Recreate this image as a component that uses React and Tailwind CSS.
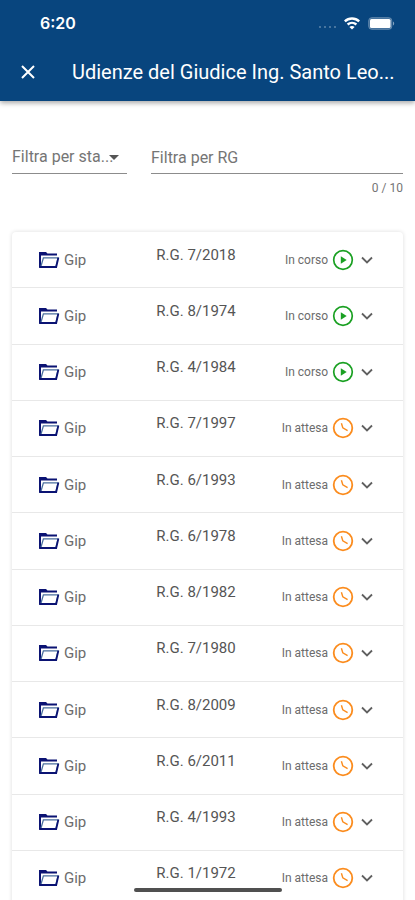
import { useState } from "react";

const MAX_RG = 10;

const HEARINGS = [
  { rg: "7/2018", status: "running" },
  { rg: "8/1974", status: "running" },
  { rg: "4/1984", status: "running" },
  { rg: "7/1997", status: "waiting" },
  { rg: "6/1993", status: "waiting" },
  { rg: "6/1978", status: "waiting" },
  { rg: "8/1982", status: "waiting" },
  { rg: "7/1980", status: "waiting" },
  { rg: "8/2009", status: "waiting" },
  { rg: "6/2011", status: "waiting" },
  { rg: "4/1993", status: "waiting" },
  { rg: "1/1972", status: "waiting" },
];

function WifiIcon() {
  return (
    <svg width="16" height="13" viewBox="0 0 16 13" fill="none" stroke="#fff" strokeWidth="2.4" aria-hidden="true">
      <path d="M.8 4.4C4.8.6 11.2.6 15.2 4.4" />
      <path d="M3.6 7.5c2.5-2.2 6.3-2.2 8.8 0" />
      <path d="M8 12.6 5.4 9.9c1.5-1.3 3.7-1.3 5.2 0z" fill="#fff" stroke="none" />
    </svg>
  );
}

function BatteryIcon() {
  return (
    <svg width="27" height="13" viewBox="0 0 27 13" aria-hidden="true">
      <rect x=".5" y=".5" width="23.5" height="12" rx="3.5" fill="#fff" fillOpacity=".25" stroke="#fff" strokeOpacity=".2" />
      <rect x="2" y="2" width="20.5" height="9" rx="1.5" fill="#fff" />
      <path d="M25 4.5c1.6.6 1.6 3.4 0 4z" fill="#fff" fillOpacity=".5" />
    </svg>
  );
}

function FolderIcon() {
  return (
    <svg width="22" height="18" viewBox="0 0 22 18" aria-hidden="true">
      <path d="M1 16.5V1h7l1.5 1.6H19v1.9H3v12z" fill="#0b1373" />
      <path d="M5.4 6.8H20l-2.2 9H2.8z" fill="#fff" stroke="#4a6f9d" strokeWidth="1.3" />
      <path d="M20.4 6.6 18.2 16H1.2" fill="none" stroke="#0b1373" strokeWidth="1.8" />
    </svg>
  );
}

function PlayIcon() {
  return (
    <svg width="22" height="22" viewBox="0 0 22 22" aria-hidden="true">
      <circle cx="11" cy="11" r="9.3" fill="none" stroke="#1aa022" strokeWidth="1.7" />
      <path d="M8.8 7.2v7.6l5.9-3.8z" fill="#1aa022" />
    </svg>
  );
}

function ClockIcon() {
  return (
    <svg width="22" height="22" viewBox="0 0 22 22" fill="none" stroke="#fb8c1e" aria-hidden="true">
      <circle cx="11" cy="11" r="9.3" strokeWidth="1.8" />
      <path d="m9.4 6.2 1.4 4.6 4.8 2.8" strokeWidth="1.4" />
    </svg>
  );
}

function HearingRow({ hearing }) {
  const [open, setOpen] = useState(false);
  const running = hearing.status === "running";

  return (
    <li className="border-b border-[#e8e8e8]">
      <button
        type="button"
        aria-expanded={open}
        onClick={() => setOpen(!open)}
        className="flex h-full w-full items-center pr-7 pl-[26px] text-left text-[#6c6c6c]"
      >
        <span className="flex flex-1 items-center gap-1 text-[15px] leading-5">
          <FolderIcon />
          Gip
        </span>
        <span className="pb-2.5 text-[15px] leading-5 text-[#555]">R.G. {hearing.rg}</span>
        <span className="flex flex-1 items-center justify-end gap-1 text-xs">
          {running ? "In corso" : "In attesa"}
          {running ? <PlayIcon /> : <ClockIcon />}
        </span>
        <svg
          width="16"
          height="10"
          viewBox="0 0 16 10"
          fill="none"
          stroke="#606060"
          strokeWidth="1.8"
          className={open ? "ml-[5px] rotate-180" : "ml-[5px]"}
          aria-hidden="true"
        >
          <path d="m3 2.5 5 5 5-5" />
        </svg>
      </button>
    </li>
  );
}

export default function App() {
  const [status, setStatus] = useState("");
  const [rg, setRg] = useState("");

  const visible = HEARINGS.filter(
    (h) => (!status || h.status === status) && h.rg.includes(rg)
  );

  return (
    <div className="relative flex h-screen flex-col overflow-hidden bg-white font-[Roboto,sans-serif]">
      <header className="z-10 bg-[#08457e] text-white shadow-[0_2px_5px_rgba(0,0,0,0.35)]">
        <div className="flex h-[46px] items-center justify-between pr-5 pl-10">
          <span className="font-[Inter,sans-serif] text-base font-semibold">6:20</span>
          <div className="flex items-center gap-2">
            <span className="flex gap-[3px] pt-2" aria-hidden="true">
              <i className="size-[2px] rounded-full bg-white/35" />
              <i className="size-[2px] rounded-full bg-white/35" />
              <i className="size-[2px] rounded-full bg-white/35" />
              <i className="size-[2px] rounded-full bg-white/35" />
            </span>
            <WifiIcon />
            <BatteryIcon />
          </div>
        </div>
        <div className="flex h-[55px] items-center gap-9 pb-1 pl-5 pr-5">
          <button type="button" aria-label="Chiudi" className="flex size-4 shrink-0 items-center justify-center">
            <svg width="16" height="16" viewBox="0 0 16 16" stroke="#fff" strokeWidth="2">
              <path d="m2 2 12 12M14 2 2 14" />
            </svg>
          </button>
          <h1 className="min-w-0 flex-1 text-xl whitespace-nowrap">
            Udienze del Giudice Ing. Santo Leo...
          </h1>
        </div>
      </header>

      <main className="flex-1 overflow-y-auto px-3 pt-10 [scrollbar-width:none]">
        <div className="flex gap-6 text-base text-[#757575]">
          <div className="relative w-[115px] shrink-0">
            <select
              aria-label="Filtra per stato"
              value={status}
              onChange={(e) => setStatus(e.target.value)}
              className="h-[33px] w-full appearance-none border-b border-[#8c8c8c] bg-transparent outline-none"
            >
              <option value="">Filtra per sta...</option>
              <option value="running">In corso</option>
              <option value="waiting">In attesa</option>
            </select>
            <svg
              width="10"
              height="5"
              viewBox="0 0 10 5"
              className="pointer-events-none absolute top-3.5 right-2"
              aria-hidden="true"
            >
              <path d="M0 0h10L5 5z" fill="#555" />
            </svg>
          </div>
          <div className="min-w-0 flex-1">
            <input
              type="text"
              aria-label="Filtra per RG"
              placeholder="Filtra per RG"
              maxLength={MAX_RG}
              value={rg}
              onChange={(e) => setRg(e.target.value)}
              className="block h-[33px] w-full border-b border-[#8c8c8c] bg-transparent outline-none placeholder:text-[#757575]"
            />
            <p className="pt-1.5 text-right text-xs">
              {rg.length} / {MAX_RG}
            </p>
          </div>
        </div>

        <ul className="mt-9 grid min-h-[675px] auto-rows-fr rounded-sm shadow-[0_0_4px_rgba(0,0,0,0.14)]">
          {visible.map((hearing) => (
            <HearingRow key={hearing.rg} hearing={hearing} />
          ))}
        </ul>
      </main>

      <div className="absolute bottom-2 left-1/2 h-1 w-[148px] -translate-x-1/2 rounded-full bg-[#505050]" />
    </div>
  );
}
